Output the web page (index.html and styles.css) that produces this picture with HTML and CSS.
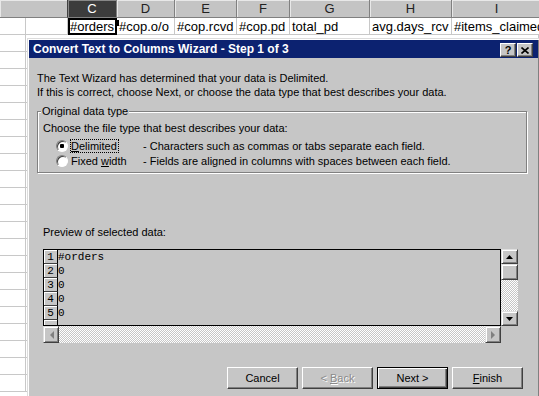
FILE: index.html
```html
<!DOCTYPE html>
<html lang="en">
<head>
    <meta charset="UTF-8">
    <title>Convert Text to Columns Wizard</title>
    <link rel="stylesheet" href="styles.css">
</head>
<body>

<!-- Spreadsheet behind the dialog -->
<div class="sheet">
    <div class="hdr">
        <div class="cb"></div>
        <div class="cc selected">C</div>
        <div class="cd">D</div>
        <div class="ce">E</div>
        <div class="cf">F</div>
        <div class="cg">G</div>
        <div class="ch">H</div>
        <div class="ci">I</div>
    </div>
    <div class="row">
        <div class="c0"></div><div class="c1"></div>
        <div class="cc active">#orders<span class="handle"></span></div>
        <div class="cd">#cop.o/o</div>
        <div class="ce">#cop.rcvd</div>
        <div class="cf">#cop.pd</div>
        <div class="cg">total_pd</div>
        <div class="ch">avg.days_rcv</div>
        <div class="ci">#items_claimed</div>
    </div>
    <div class="row"><div class="c0"></div><div class="rest"></div></div>
    <div class="row"><div class="c0"></div><div class="rest"></div></div>
    <div class="row"><div class="c0"></div><div class="rest"></div></div>
    <div class="row"><div class="c0"></div><div class="rest"></div></div>
    <div class="row"><div class="c0"></div><div class="rest"></div></div>
    <div class="row"><div class="c0"></div><div class="rest"></div></div>
    <div class="row"><div class="c0"></div><div class="rest"></div></div>
    <div class="row"><div class="c0"></div><div class="rest"></div></div>
    <div class="row"><div class="c0"></div><div class="rest"></div></div>
    <div class="row"><div class="c0"></div><div class="rest"></div></div>
    <div class="row"><div class="c0"></div><div class="rest"></div></div>
    <div class="row"><div class="c0"></div><div class="rest"></div></div>
    <div class="row"><div class="c0"></div><div class="rest"></div></div>
    <div class="row"><div class="c0"></div><div class="rest"></div></div>
    <div class="row"><div class="c0"></div><div class="rest"></div></div>
    <div class="row"><div class="c0"></div><div class="rest"></div></div>
    <div class="row"><div class="c0"></div><div class="rest"></div></div>
    <div class="row"><div class="c0"></div><div class="rest"></div></div>
    <div class="row"><div class="c0"></div><div class="rest"></div></div>
    <div class="row"><div class="c0"></div><div class="rest"></div></div>
    <div class="row"><div class="c0"></div><div class="rest"></div></div>
</div>

<!-- Wizard dialog -->
<div class="dialog">
    <div class="titlebar">
        <span>Convert Text to Columns Wizard - Step 1 of 3</span>
        <div class="tbtns">
            <div class="tbtn">?</div>
            <div class="tbtn">
                <svg width="8" height="7" viewBox="0 0 8 7"><path d="M0.5 0.5L7.5 6.5M7.5 0.5L0.5 6.5" stroke="#000" stroke-width="1.6"/></svg>
            </div>
        </div>
    </div>

    <div class="wizard">
        <p class="intro">The Text Wizard has determined that your data is Delimited.<br>If this is correct, choose Next, or choose the data type that best describes your data.</p>

        <fieldset class="group">
            <legend>Original data type</legend>
            <div class="hint">Choose the file type that best describes your data:</div>
            <div class="opt first">
                <span class="radio checked"></span>
                <span class="opt-label"><span class="focus"><u>D</u>elimited</span></span>
                <span>- Characters such as commas or tabs separate each field.</span>
            </div>
            <div class="opt">
                <span class="radio"></span>
                <span class="opt-label">Fixed <u>w</u>idth</span>
                <span>- Fields are aligned in columns with spaces between each field.</span>
            </div>
        </fieldset>

        <div class="preview-label">Preview of selected data:</div>
        <div class="preview">
            <div class="data">
                <div class="prow"><div class="pnum">1</div><div class="ptext">#orders</div></div>
                <div class="prow"><div class="pnum">2</div><div class="ptext">0</div></div>
                <div class="prow"><div class="pnum">3</div><div class="ptext">0</div></div>
                <div class="prow"><div class="pnum">4</div><div class="ptext">0</div></div>
                <div class="prow"><div class="pnum">5</div><div class="ptext">0</div></div>
                <div class="prow"><div class="pnum"></div><div class="ptext"></div></div>
            </div>
            <div class="vscroll">
                <div class="sbtn"><svg width="7" height="4" viewBox="0 0 7 4"><path d="M3.5 0L7 4H0z" fill="#000"/></svg></div>
                <div class="thumb"></div>
                <div class="track"></div>
                <div class="sbtn"><svg width="7" height="4" viewBox="0 0 7 4"><path d="M0 0H7L3.5 4z" fill="#000"/></svg></div>
            </div>
            <div class="hscroll">
                <div class="sbtn"><svg width="5" height="8" viewBox="0 0 5 8"><path d="M5 0V8L1 4z" fill="#808080"/></svg></div>
                <div class="track"></div>
                <div class="sbtn"><svg width="5" height="8" viewBox="0 0 5 8"><path d="M0 0V8L4 4z" fill="#808080"/></svg></div>
            </div>
            <div class="corner"></div>
        </div>

        <div class="buttons">
            <div class="btn">Cancel</div>
            <div class="btn disabled"><span>&lt; <u>B</u>ack</span></div>
            <div class="btn default">Next &gt;</div>
            <div class="btn"><span><u>F</u>inish</span></div>
        </div>
    </div>
</div>

</body>
</html>
```

FILE: styles.css
```css
body {
    margin: 0;
    width: 539px;
    height: 396px;
    overflow: hidden;
    position: relative;
    background: #fff;
    font-family: "Liberation Sans", Arial, sans-serif;
}

/* spreadsheet */

.sheet {
    font-size: 13px;
    color: #000;
}

.hdr {
    display: flex;
    height: 18px;
}

.hdr div {
    flex: none;
    box-sizing: border-box;
    background: #c4c4c4;
    border-right: 1px solid #808080;
    border-bottom: 1px solid #808080;
    box-shadow: inset 1px 1px 0 #e8e8e8;
    text-align: center;
    line-height: 17px;
    color: #222;
}

.hdr .cb {
    border-right-color: #404040;
}

.hdr .selected {
    background: #3c3c3c;
    color: #fff;
    box-shadow: inset 1px 1px 0 #888;
}

.row {
    display: flex;
    height: 17px;
}

.row div {
    flex: none;
    box-sizing: border-box;
    border-right: 1px solid #c8c8c8;
    border-bottom: 1px solid #c8c8c8;
    padding-left: 2px;
    line-height: 17px;
    white-space: nowrap;
    overflow: hidden;
}

.row:first-of-type {
    height: 18px;
}

.c0 { width: 26px; }
.c1 { width: 42px; }
.cb { width: 68px; }
.cc { width: 49px; }
.cd { width: 58px; }
.ce { width: 62px; }
.cf { width: 53px; }
.cg { width: 80px; }
.ch { width: 82px; }
.ci { width: 90px; }

.row .rest {
    flex: 1;
}

.row .active {
    position: relative;
    border: 2px solid #000;
    padding-left: 0;
    line-height: 14px;
    overflow: visible;
}

.handle {
    position: absolute;
    right: -4px;
    top: 0;
    width: 4px;
    height: 6px;
    background: #000;
}

/* dialog */

.dialog {
    position: absolute;
    left: 27px;
    top: 38px;
    width: 513px;
    height: 372px;
    box-sizing: border-box;
    background: #c6c6c6;
    border: 1px solid;
    border-color: #dcdcdc #404040 #404040 #dcdcdc;
    box-shadow: inset 1px 1px 0 #fff, inset -1px -1px 0 #808080;
    padding: 1px;
    font-size: 11px;
    color: #000;
}

.titlebar {
    display: flex;
    align-items: center;
    justify-content: space-between;
    height: 18px;
    padding: 0 5px 0 4px;
    background: #0c2270;
    color: #fff;
    font-size: 12px;
    font-weight: bold;
}

.tbtns {
    display: flex;
    gap: 1px;
    margin-top: 2px;
}

.tbtn {
    width: 16px;
    height: 14px;
    box-sizing: border-box;
    display: flex;
    align-items: center;
    justify-content: center;
    background: #c6c6c6;
    border: 1px solid;
    border-color: #fff #404040 #404040 #fff;
    box-shadow: inset -1px -1px 0 #808080;
    color: #000;
    font-size: 11px;
    font-weight: bold;
}

.wizard {
    padding-left: 8px;
}

.intro {
    margin: 13px 0 0 0;
    line-height: 14px;
}

.group {
    box-sizing: border-box;
    width: 490px;
    margin: 5px 0 0 0;
    padding: 0 0 4px 5px;
    border: 1px solid #808080;
    box-shadow: inset 1px 1px 0 #fff, 1px 1px 0 #fff;
    line-height: 14px;
}

.group legend {
    padding: 0 1px;
    margin-left: -2px;
    background: #c6c6c6;
}

.hint {
    margin-top: 3px;
}

.opt {
    display: flex;
    align-items: center;
    height: 14px;
    margin-top: 1px;
}

.opt.first {
    margin-top: 4px;
}

.radio {
    flex: none;
    width: 12px;
    height: 12px;
    box-sizing: border-box;
    margin-left: 13px;
    margin-right: 3px;
    border-radius: 50%;
    background: #fff;
    border: 1px solid;
    border-color: #808080 #fff #fff #808080;
    box-shadow: inset 1px 1px 0 #404040;
}

.radio.checked {
    background: radial-gradient(circle, #000 0 2px, #fff 2.5px);
}

.opt-label {
    width: 72px;
    flex: none;
}

.focus {
    outline: 1px dotted #000;
    outline-offset: 0;
    padding: 0 1px 0 0;
}

.preview-label {
    margin: 52px 0 0 6px;
    line-height: 14px;
}

.preview {
    display: grid;
    grid-template-columns: 458px 17px;
    grid-template-rows: 77px 17px;
    margin: 10px 0 0 6px;
}

.data {
    box-sizing: border-box;
    border: 1px solid #000;
    overflow: hidden;
    font-family: "Liberation Mono", "Courier New", monospace;
    font-size: 11px;
}

.prow {
    display: flex;
    height: 14px;
    line-height: 14px;
}

.pnum {
    width: 14px;
    box-sizing: border-box;
    text-align: center;
    border-right: 1px solid #000;
    border-bottom: 1px solid #404040;
    box-shadow: inset 1px 1px 0 #fff;
}

.ptext {
    padding-left: 0;
    white-space: pre;
}

.vscroll {
    display: flex;
    flex-direction: column;
}

.hscroll {
    display: flex;
}

.sbtn,
.thumb {
    flex: none;
    box-sizing: border-box;
    display: flex;
    align-items: center;
    justify-content: center;
    background: #c6c6c6;
    border: 1px solid;
    border-color: #e0e0e0 #404040 #404040 #e0e0e0;
    box-shadow: inset 1px 1px 0 #fff, inset -1px -1px 0 #808080;
}

.vscroll .sbtn {
    height: 15px;
}

.vscroll .thumb {
    height: 16px;
}

.hscroll .sbtn {
    width: 16px;
}

.track {
    flex: 1;
    background: repeating-conic-gradient(#fff 0 25%, #c6c6c6 0 50%) 0 0 / 2px 2px;
}

.buttons {
    display: flex;
    gap: 4px;
    margin: 24px 0 0 190px;
}

.btn {
    width: 71px;
    height: 22px;
    box-sizing: border-box;
    display: flex;
    align-items: center;
    justify-content: center;
    background: #c6c6c6;
    border: 1px solid;
    border-color: #fff #404040 #404040 #fff;
    box-shadow: inset -1px -1px 0 #808080;
}

.btn.disabled {
    color: #8a8a8a;
    text-shadow: 1px 1px 0 #fff;
}

.btn.default {
    border-color: #000;
    box-shadow: inset 1px 1px 0 #fff, inset -1px -1px 0 #404040, inset -2px -2px 0 #808080;
}
```
